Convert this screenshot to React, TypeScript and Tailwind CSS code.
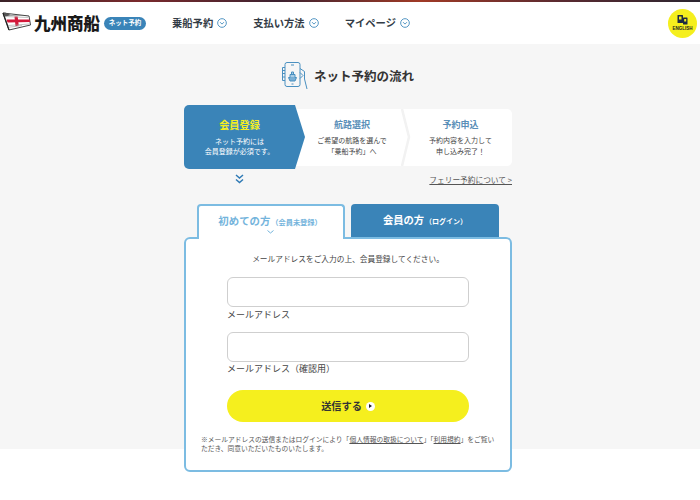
import React from 'react'

const NavChevron = () => (
    <svg width="10" height="10" viewBox="0 0 18 18" fill="none" stroke="#4a90c0" strokeWidth="1.700">
        <circle cx="9" cy="9" r="7.800" />
        <path d="M5.500 7.500 9 11l3.500-3.500" />
    </svg>
)

const NavItem = ({ label }: { label: string }) => (
    <div className='flex items-center gap-[4px] text-[10.300px] font-bold text-[#333c46]'>
        <span>{label}</span>
        <NavChevron />
    </div>
)

const Flag = () => (
    <svg width="29" height="19" viewBox="0 0 29 19" className='mt-[-3px]'>
        <path d="M1 1 27 4l1.500 9L7 18z" fill="#fff" stroke="#444" strokeWidth="1" />
        <path d="M1 1 3 .5l6 2.500 15 .7 3 .3-19-.5-5 1z" fill="#555" />
        <path d="M4.500 7.500 27.500 7.500 28 10 5.500 10.500z" fill="#d3193a" />
        <path d="M12.500 4.500h3.200l1 9-3.200.800z" fill="#d3193a" />
        <path d="M3 4.500 26 5.500M6 13.500 27.500 12M5 15.500 20 13.500" stroke="#999" strokeWidth=".6" />
        <path d="M1 1 7 18" stroke="#222" strokeWidth="1.200" />
    </svg>
)

const PhoneIcon = () => (
    <svg width="27" height="28" viewBox="0 0 27 28" fill="none" stroke="#4a90c0" strokeWidth="1">
        <rect x="4" y=".500" width="15" height="24" rx="2" />
        <path d="M4 5.500H1.500v13H4M1.500 8.500H4M1.500 11.500H4M1.500 15H4" />
        <path d="M19 6.500l4.500 3v7.500l2.500 10M19 10.500l3 3-3 3" />
        <path d="M10 3h3M10.500 22h2" />
        <path d="M7.500 15.500h8l-1.500 3.500H9z" fill="#7bb0d6" />
        <path d="M9 15.500v-3h5v3M10.500 12.500v-2.500h2v2.500" fill="#a9cde6" />
    </svg>
)

const App = () => {
    return (
        <div className='w-[700px] h-[500px] overflow-hidden bg-white text-[#444] font-["Noto_Sans_CJK_JP",sans-serif]'>
            <div className='h-[2px] bg-[linear-gradient(90deg,#3a2228,#7a2a2c,#3d2230,#a03a26,#5a2a30,#2b2530)]'></div>

            <header className='h-[42px] flex items-center pl-[2px] pr-[3px] bg-white'>
                <Flag />
                <span className='ml-[3px] text-[16.500px] leading-none font-black text-[#1a1a1a]'>九州商船</span>
                <span className='ml-[4px] w-[42px] h-[13px] rounded-full bg-[#3a84b8] text-white text-[6.500px] font-bold flex items-center justify-center'>ネット予約</span>
                <nav className='flex items-center ml-[26px] gap-[26px]'>
                    <NavItem label='乗船予約' />
                    <NavItem label='支払い方法' />
                    <NavItem label='マイページ' />
                </nav>
                <div className='ml-auto w-[29px] h-[29px] rounded-full bg-[#f5ef1e] flex flex-col items-center justify-center'>
                    <svg width="11" height="11" viewBox="0 0 11 11" className='mt-[1px]'>
                        <rect x="0.500" y="0" width="5.500" height="8" rx=".5" fill="#1d2a44" />
                        <rect x="6" y="2.500" width="4.500" height="7" rx=".5" fill="#1d2a44" />
                        <rect x="2" y="1.500" width="2.500" height="3" fill="#f5ef1e" />
                        <rect x="7.200" y="4" width="2" height="2.500" fill="#f5ef1e" />
                    </svg>
                    <span className='text-[4.500px] leading-[6px] font-bold text-[#222] font-["Liberation_Sans",sans-serif]'>ENGLISH</span>
                </div>
            </header>

            <main className='h-[405px] bg-[#f6f6f6] pt-[17px]'>
                <div className='flex items-center justify-center gap-[6px] h-[30px] ml-[-5px]'>
                    <PhoneIcon />
                    <h1 className='text-[12.500px] font-bold text-[#333]'>ネット予約の流れ</h1>
                </div>

                <div className='ml-[184px] w-[328px] mt-[14px]'>
                    <div className='relative flex items-center h-[64px]'>
                        <div className='absolute left-0 right-0 top-[4px] bottom-[3px] bg-white rounded-[5px]'></div>
                        <div className='relative w-[121px] h-[64px] bg-[#3a84b8] rounded-l-[5px] [clip-path:polygon(0_0,111px_0,121px_50%,111px_100%,0_100%)] flex flex-col items-center justify-center pr-[10px] text-white'>
                            <div className='text-[10.200px] leading-[14px] font-bold text-[#f5ef1e]'>会員登録</div>
                            <div className='text-[7px] leading-[10.500px] mt-[4px] text-center'>ネット予約には<br />会員登録が必須です。</div>
                        </div>
                        <div className='relative w-[96px] pr-[2px] flex flex-col items-center text-center'>
                            <div className='text-[9px] leading-[13px] font-bold text-[#5a8fb8]'>航路選択</div>
                            <div className='text-[7px] leading-[10.500px] mt-[4px]'>ご希望の航路を選んで<br />「乗船予約」へ</div>
                        </div>
                        <svg width="10" height="57" viewBox="0 0 10 57" fill="none" stroke="#f2f2f2" strokeWidth="2.500" className='relative mt-[1px]'>
                            <path d="M1 0l7 28-7 29" />
                        </svg>
                        <div className='relative w-[101px] pr-[2px] flex flex-col items-center text-center'>
                            <div className='text-[9px] leading-[13px] font-bold text-[#5a8fb8]'>予約申込</div>
                            <div className='text-[7px] leading-[10.500px] mt-[4px]'>予約内容を入力して<br />申し込み完了！</div>
                        </div>
                    </div>

                    <div className='flex items-center justify-between h-[14px] mt-[3px]'>
                        <svg width="9" height="10" viewBox="0 0 9 10" fill="none" stroke="#2f7ab5" strokeWidth="1.500" className='ml-[51px]'>
                            <path d="M1 1l3.500 3L8 1M1 5.500l3.500 3 3.500-3" />
                        </svg>
                        <a className='text-[7.700px] underline text-[#555] mt-[2px]'>フェリー予約について &gt;</a>
                    </div>

                    <div className='flex pl-[13px] gap-[6px] mt-[18px] relative z-10'>
                        <div className='w-[148px] h-[35px] -mb-[2px] bg-white border-2 border-b-0 border-[#7cbce2] rounded-t-[4px] flex flex-col items-center pt-[9px] pr-[2px]'>
                            <div className='flex items-baseline text-[#74b4dc] font-bold leading-[12px]'>
                                <span className='text-[10.400px]'>初めての方</span>
                                <span className='text-[7.200px] ml-[1px]'>（会員未登録）</span>
                            </div>
                            <svg width="7" height="4" viewBox="0 0 7 4" fill="none" stroke="#74b4dc" strokeWidth="1" className='mt-[2px]'>
                                <path d="M.5.500l3 2.500 3-2.500" />
                            </svg>
                        </div>
                        <div className='w-[148px] h-[33px] bg-[#3a84b8] rounded-t-[4px] flex items-baseline justify-center pt-[10px] text-white font-bold leading-[12px]'>
                            <span className='text-[10.300px]'>会員の方</span>
                            <span className='text-[7px] ml-[1px]'>（ログイン）</span>
                        </div>
                    </div>

                    <div className='h-[235px] bg-white border-2 border-[#7cbce2] rounded-[6px] pt-[14px] px-[15px]'>
                        <p className='text-[7.700px] leading-[12px] text-center'>メールアドレスをご入力の上、会員登録してください。</p>
                        <div className='w-[242px] ml-[26px] mt-[12px]'>
                            <div className='h-[30px] bg-white border border-[#cfcfcf] rounded-[6px]'></div>
                            <label className='block text-[9px] leading-[14px] mt-[1px]'>メールアドレス</label>
                            <div className='h-[30px] bg-white border border-[#cfcfcf] rounded-[6px] mt-[10px]'></div>
                            <label className='block text-[9px] leading-[14px]'>メールアドレス（確認用）</label>
                            <button className='w-full h-[32px] mt-[14px] bg-[#f5ef1e] rounded-full flex items-center justify-center gap-[4px] text-[10.200px] font-bold text-[#333]'>
                                送信する
                                <span className='w-[9px] h-[9px] rounded-full bg-white flex items-center justify-center'>
                                    <span className='w-0 h-0 border-y-[2px] border-y-transparent border-l-[3px] border-l-[#222]'></span>
                                </span>
                            </button>
                        </div>
                        <p className='text-[6.750px] leading-[9px] mt-[13px] text-[#555]'>
                            ※メールアドレスの送信またはログインにより「<span className='underline'>個人情報の取扱について</span>」「<span className='underline'>利用規約</span>」をご覧いただき、同意いただいたものいたします。
                        </p>
                    </div>
                </div>
            </main>
        </div>
    )
}

export default App
